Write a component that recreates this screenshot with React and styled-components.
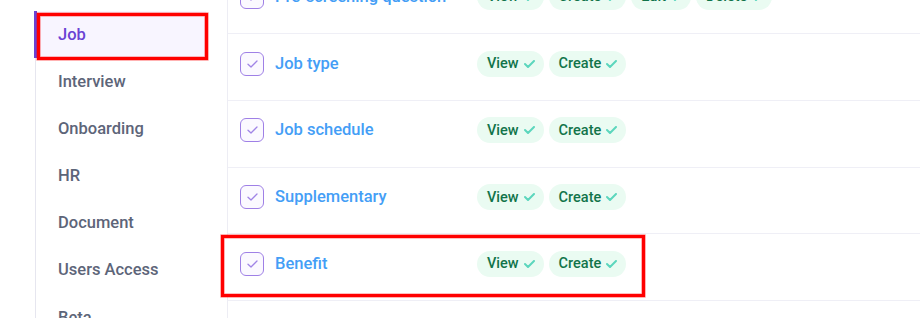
import React from "react";
import styled, { createGlobalStyle } from "styled-components";

const Global = createGlobalStyle`
  html, body { margin: 0; padding: 0; background: #ffffff; }
  body { font-family: Roboto, "Noto Sans", "Liberation Sans", sans-serif; overflow: hidden; }
  * { box-sizing: border-box; }
`;

const Page = styled.div`
  display: flex;
  width: 920px;
  height: 318px;
  overflow: hidden;
  background: #fff;
`;

const Sidebar = styled.aside`
  flex: 0 0 228px;
  padding: 10.5px 21px 0 35px;
  border-right: 1px solid #ededf4;
`;

const Nav = styled.nav`
  display: flex;
  flex-direction: column;
  border-left: 1px solid #e6e6ef;
`;

const NavItem = styled.div`
  position: relative;
  height: 47.17px;
  display: flex;
  align-items: center;
  padding-left: 22px;
  font-size: 16.5px;
  font-weight: 500;
  color: ${(p) => (p.$active ? "#6a43d4" : "#5d6579")};
  background: ${(p) => (p.$active ? "#f8f5ff" : "transparent")};
  &::before {
    content: "";
    display: ${(p) => (p.$active ? "block" : "none")};
    position: absolute;
    left: -2px;
    top: 0;
    bottom: 0;
    width: 3px;
    background: #6a43d4;
  }
`;

const Annot = styled.div`
  position: absolute;
  border: 3px solid #ff0000;
  box-shadow: 0 0 0 0.6px rgba(255, 0, 0, 0.5), inset 0 0 0 0.6px rgba(255, 0, 0, 0.5);
  pointer-events: none;
`;

const NavAnnot = styled(Annot)`
  left: 1px;
  top: 2.5px;
  width: 171px;
  height: 47px;
`;

const Content = styled.main`
  position: relative;
  flex: 1;
`;

const List = styled.div`
  margin-top: -32.75px;
  display: flex;
  flex-direction: column;
`;

const Row = styled.div`
  position: relative;
  height: 66.75px;
  display: flex;
  align-items: flex-start;
  padding: 16.5px 0 0 12px;
  border-bottom: 1px solid #efeff6;
`;

const RowInner = styled.div`
  position: relative;
  z-index: 1;
  display: flex;
  align-items: center;
  height: 26px;
`;

const Box = styled.span`
  flex: 0 0 24px;
  width: 24px;
  height: 24px;
  border: 1.5px solid #9f80e6;
  border-radius: 6px;
  background: #fbf9ff;
  display: flex;
  align-items: center;
  justify-content: center;
`;

const Label = styled.span`
  flex: 0 0 202px;
  margin-left: 11px;
  font-size: 16.5px;
  font-weight: 500;
  color: #449ef6;
  line-height: 26px;
  white-space: nowrap;
`;

const Chips = styled.div`
  display: flex;
  gap: 5px;
`;

const Chip = styled.span`
  display: inline-flex;
  align-items: center;
  gap: 5px;
  height: 26px;
  padding: 0 9px 0 10px;
  border-radius: 13px;
  background: #eafbf2;
  color: #11744a;
  font-size: 14.5px;
  font-weight: 500;
`;

const RowAnnot = styled(Annot)`
  left: -7px;
  top: 0.5px;
  width: 424px;
  height: 62px;
  background: #fff;
  z-index: 0;
`;

const BoxCheck = () => (
  <svg width="11" height="8" viewBox="0 0 11 8" fill="none">
    <path d="M1 4.2 L4 7 L10 1" stroke="#a084e6" strokeWidth="1.3" strokeLinecap="round" strokeLinejoin="round" />
  </svg>
);

const ChipCheck = () => (
  <svg width="11" height="8" viewBox="0 0 11 8" fill="none">
    <path d="M1 4 L4 7 L10 1" stroke="#5cd6bd" strokeWidth="2" strokeLinecap="round" strokeLinejoin="round" />
  </svg>
);

const rows = [
  { label: "Pre-screening question", perms: ["View", "Create", "Edit", "Delete"] },
  { label: "Job type", perms: ["View", "Create"] },
  { label: "Job schedule", perms: ["View", "Create"] },
  { label: "Supplementary", perms: ["View", "Create"] },
  { label: "Benefit", perms: ["View", "Create"], annotated: true },
];

const navItems = ["Job", "Interview", "Onboarding", "HR", "Document", "Users Access", "Beta"];

export default function App() {
  return (
    <>
      <Global />
      <Page>
        <Sidebar>
          <Nav>
            {navItems.map((n, i) => (
              <NavItem key={n} $active={i === 0}>
                {n}
                {i === 0 && <NavAnnot />}
              </NavItem>
            ))}
          </Nav>
        </Sidebar>
        <Content>
          <List>
            {rows.map((r) => (
              <Row key={r.label}>
                {r.annotated && <RowAnnot />}
                <RowInner>
                  <Box>
                    <BoxCheck />
                  </Box>
                  <Label>{r.label}</Label>
                  <Chips>
                    {r.perms.map((p) => (
                      <Chip key={p}>
                        {p}
                        <ChipCheck />
                      </Chip>
                    ))}
                  </Chips>
                </RowInner>
              </Row>
            ))}
          </List>
        </Content>
      </Page>
    </>
  );
}
